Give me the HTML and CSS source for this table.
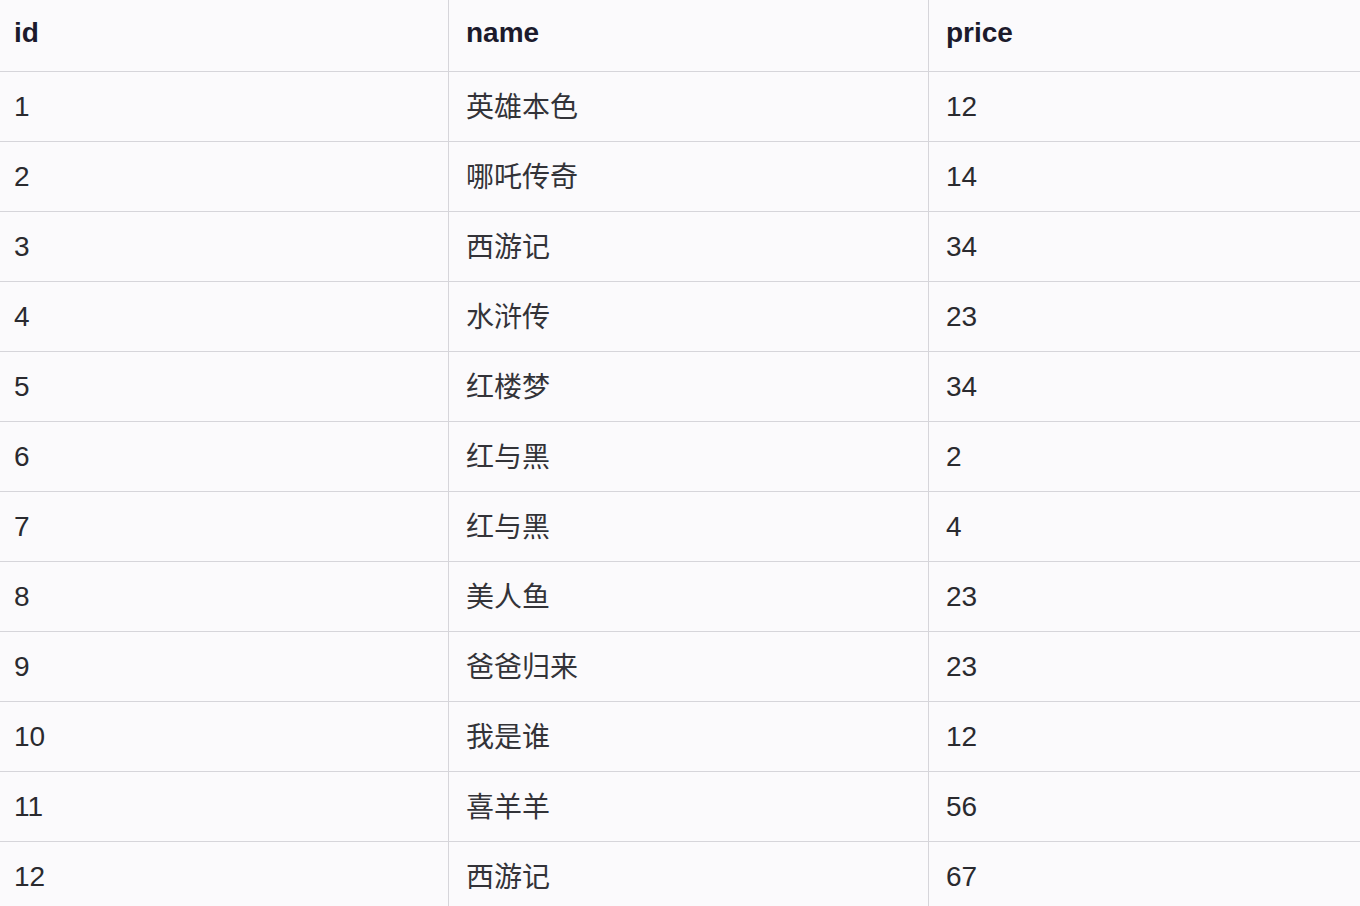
FILE: index.html
```html
<!DOCTYPE html>
<html lang="zh">
<head>
<meta charset="utf-8">
<title>table</title>
<link rel="stylesheet" href="styles.css">
</head>
<body>
<div class="table">
  <div class="row head"><div class="cell c1">id</div><div class="cell c2">name</div><div class="cell c3">price</div></div>
  <div class="row"><div class="cell c1">1</div><div class="cell c2">英雄本色</div><div class="cell c3">12</div></div>
  <div class="row"><div class="cell c1">2</div><div class="cell c2">哪吒传奇</div><div class="cell c3">14</div></div>
  <div class="row"><div class="cell c1">3</div><div class="cell c2">西游记</div><div class="cell c3">34</div></div>
  <div class="row"><div class="cell c1">4</div><div class="cell c2">水浒传</div><div class="cell c3">23</div></div>
  <div class="row"><div class="cell c1">5</div><div class="cell c2">红楼梦</div><div class="cell c3">34</div></div>
  <div class="row"><div class="cell c1">6</div><div class="cell c2">红与黑</div><div class="cell c3">2</div></div>
  <div class="row"><div class="cell c1">7</div><div class="cell c2">红与黑</div><div class="cell c3">4</div></div>
  <div class="row"><div class="cell c1">8</div><div class="cell c2">美人鱼</div><div class="cell c3">23</div></div>
  <div class="row"><div class="cell c1">9</div><div class="cell c2">爸爸归来</div><div class="cell c3">23</div></div>
  <div class="row"><div class="cell c1">10</div><div class="cell c2">我是谁</div><div class="cell c3">12</div></div>
  <div class="row"><div class="cell c1">11</div><div class="cell c2">喜羊羊</div><div class="cell c3">56</div></div>
  <div class="row"><div class="cell c1">12</div><div class="cell c2">西游记</div><div class="cell c3">67</div></div>
</div>
</body>
</html>
```
FILE: styles.css
```css
html, body {
  margin: 0;
  padding: 0;
  height: 100%;
  overflow: hidden;
  background: #fbfafc;
}
body {
  font-family: "Liberation Sans", Arial, "Noto Sans CJK SC", sans-serif;
  font-size: 28px;
  color: #2a2a2f;
}
.table {
  display: flex;
  flex-direction: column;
}
.row {
  display: grid;
  grid-template-columns: 448px 480px 1fr;
  height: 70px;
  box-sizing: border-box;
  border-bottom: 1px solid #d6d5da;
}
.row.head {
  height: 72px;
  font-weight: bold;
  color: #1c1a2c;
}
.cell {
  display: flex;
  align-items: center;
  box-sizing: border-box;
  white-space: nowrap;
}
.head .cell {
  padding-bottom: 6px;
}
.c1 {
  padding-left: 14px;
}
.c2, .c3 {
  border-left: 1px solid #d6d5da;
  padding-left: 17px;
}
.row:not(.head) .c2 {
  padding-bottom: 3px;
  color: #333338;
}
```
